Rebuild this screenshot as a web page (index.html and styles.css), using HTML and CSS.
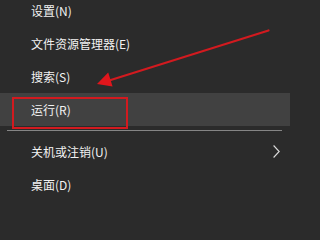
FILE: index.html
```html
<!DOCTYPE html>
<html lang="zh-CN">
<head>
<meta charset="utf-8">
<title>菜单</title>
<link rel="stylesheet" href="styles.css">
</head>
<body>
<div class="menu">
  <ul class="list">
    <li class="item">设置(N)</li>
    <li class="item">文件资源管理器(E)</li>
    <li class="item">搜索(S)</li>
    <li class="item hover">运行(R)</li>
    <li class="sep"></li>
    <li class="item has-sub"><span>关机或注销(U)</span><svg class="chev" width="7" height="13" viewBox="0 0 7 13"><polyline points="0.6,0.5 6.2,6.5 0.6,12.5" fill="none" stroke="#dcdcdc" stroke-width="1.1"/></svg></li>
    <li class="item">桌面(D)</li>
  </ul>
</div>
<svg class="annot" width="292" height="203" viewBox="0 0 292 203">
  <line x1="268.5" y1="30.5" x2="106" y2="81.5" stroke="#d21a1f" stroke-width="2.2" stroke-linecap="round"/>
  <polygon points="97,84 108.2,72.6 112.6,86.6" fill="#e0161c"/>
  <rect x="13" y="98" width="114" height="30" fill="none" stroke="#d21a1f" stroke-width="2"/>
</svg>
</body>
</html>
```
FILE: styles.css
```css
html, body {
  margin: 0;
  padding: 0;
}
body {
  width: 292px;
  height: 203px;
  overflow: hidden;
  background: #2b2b2b;
  position: relative;
  font-family: "Noto Sans CJK SC", "Noto Sans", sans-serif;
  font-size: 12px;
  color: #f2f2f2;
}
.menu {
  width: 292px;
  box-sizing: border-box;
  padding-right: 2px;
}
.list {
  list-style: none;
  margin: -6px 0 0 0;
  padding: 0;
}
.item {
  height: 33px;
  display: flex;
  align-items: center;
  justify-content: space-between;
  padding-left: 31px;
  padding-right: 10px;
  line-height: 1;
}
.hover {
  background: #414141;
}
.sep {
  height: 1px;
  background: #858585;
  margin: 4px 8px 4px 7px;
}
.chev {
  display: block;
}
.annot {
  position: absolute;
  left: 0;
  top: 0;
  pointer-events: none;
}
```
